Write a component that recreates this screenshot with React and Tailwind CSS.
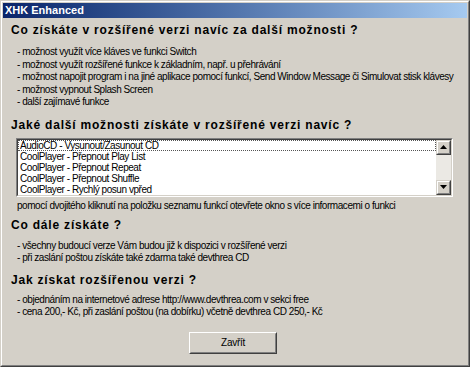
import React from "react";

const items = [
  "AudioCD - Vysunout/Zasunout CD",
  "CoolPlayer - Přepnout Play List",
  "CoolPlayer - Přepnout Repeat",
  "CoolPlayer - Přepnout Shuffle",
  "CoolPlayer - Rychlý posun vpřed",
];

function Heading({ children, className = "" }) {
  return (
    <div className={"pl-[8px] text-[12px] font-bold leading-[15px] text-black tracking-[0.8px] whitespace-nowrap " + className}>
      {children}
    </div>
  );
}

function Line({ children }) {
  return (
    <div className="pl-[14px] text-[10px] leading-[12.5px] tracking-[-0.45px] whitespace-nowrap">{children}</div>
  );
}

function ScrollBtn({ up }) {
  return (
    <div className="w-[15px] h-[15px] border border-t-[#d4d0c8] border-l-[#d4d0c8] border-b-[#404040] border-r-[#404040] bg-[#d4d0c8]">
      <div className="w-full h-full border border-t-white border-l-white border-b-[#808080] border-r-[#808080] flex items-center justify-center">
        <svg width="7" height="4" viewBox="0 0 7 4">
          {up ? <polygon points="3.5,0 7,4 0,4" fill="#000" /> : <polygon points="0,0 7,0 3.5,4" fill="#000" />}
        </svg>
      </div>
    </div>
  );
}

export default function App() {
  return (
    <div
      className="w-[470px] h-[367px] bg-[#d4d0c8] overflow-hidden text-black"
      style={{ fontFamily: '"Liberation Sans", Arial, sans-serif' }}
    >
      <div className="w-full h-full border border-t-[#d4d0c8] border-l-[#d4d0c8] border-b-[#404040] border-r-[#404040]">
        <div className="w-full h-full border border-t-white border-l-white border-b-[#808080] border-r-[#808080] p-px flex flex-col">
          <div className="h-[15px] bg-gradient-to-r from-[#0a246a] to-[#a6caf0] flex items-center pl-[2px]">
            <span className="text-white text-[11px] font-bold leading-none">XHK Enhanced</span>
          </div>
          <div className="flex-1 flex flex-col pt-[5px]">
            <Heading>Co získáte v rozšířené verzi navíc za další možnosti ?</Heading>
            <div className="mt-[8px] flex flex-col">
              <Line>- možnost využít více kláves ve funkci Switch</Line>
              <Line>- možnost využít rozšířené funkce k základním, např. u přehrávání</Line>
              <Line>- možnost napojit program i na jiné aplikace pomocí funkcí, Send Window Message či Simulovat stisk klávesy</Line>
              <Line>- možnost vypnout Splash Screen</Line>
              <Line>- další zajímavé funkce</Line>
            </div>
            <Heading className="mt-[9px]">Jaké další možnosti získáte v rozšířené verzi navíc ?</Heading>
            <div className="ml-[13px] mr-[14px] mt-[5px] h-[59px] border border-t-[#808080] border-l-[#808080] border-b-white border-r-white">
              <div className="h-full border border-t-[#404040] border-l-[#404040] border-b-[#d4d0c8] border-r-[#d4d0c8] bg-white flex">
                <div className="flex-1 flex flex-col text-[10px] leading-[9px] tracking-[-0.45px]">
                  {items.map((it, i) => (
                    <div
                      key={i}
                      className={
                        "pl-[1px] h-[11px] whitespace-nowrap " +
                        (i === 0 ? "border border-dotted border-[#555]" : "border border-transparent")
                      }
                    >
                      {it}
                    </div>
                  ))}
                </div>
                <div className="w-[15px] flex flex-col bg-[#ebe9e4]">
                  <ScrollBtn up />
                  <div className="flex-1" />
                  <ScrollBtn />
                </div>
              </div>
            </div>
            <div className="mt-[2px] pl-[14px] text-[10px] leading-[13px] tracking-[-0.45px] whitespace-nowrap">
              pomocí dvojitého kliknutí na položku seznamu funkcí otevřete okno s více informacemi o funkci
            </div>
            <Heading className="mt-[6px]">Co dále získáte ?</Heading>
            <div className="mt-[7px]">
              <Line>- všechny budoucí verze Vám budou již k dispozici v rozšířené verzi</Line>
              <Line>- při zaslání poštou získáte také zdarma také devthrea CD</Line>
            </div>
            <Heading className="mt-[8px]">Jak získat rozšířenou verzi ?</Heading>
            <div className="mt-[6px]">
              <Line>- objednáním na internetové adrese http://www.devthrea.com v sekci free</Line>
              <Line>- cena 200,- Kč, při zaslání poštou (na dobírku) včetně devthrea CD 250,- Kč</Line>
            </div>
            <div className="mt-[13px] flex justify-center pr-[4px]">
              <button className="w-[88px] h-[22px] border border-t-white border-l-white border-b-[#404040] border-r-[#404040] bg-[#d4d0c8] p-0">
                <div className="w-full h-full border border-transparent border-b-[#808080] border-r-[#808080] text-[10px] tracking-[-0.3px] flex items-center justify-center">
                  Zavřít
                </div>
              </button>
            </div>
          </div>
        </div>
      </div>
    </div>
  );
}
